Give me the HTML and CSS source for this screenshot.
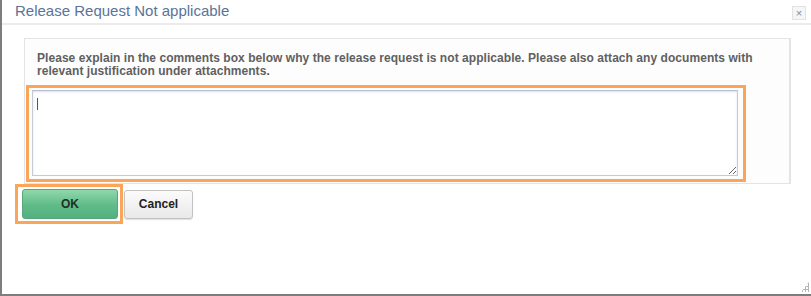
FILE: index.html
```html
<!DOCTYPE html>
<html lang="en">
<head>
    <meta charset="UTF-8">
    <meta name="viewport" content="width=device-width, initial-scale=1.0">
    <title>Release Request Not applicable</title>
    <link rel="stylesheet" href="styles.css">
</head>
<body>
    <div class="dialog">
        <div class="title-bar">
            <span class="title">Release Request Not applicable</span>
            <span class="close">&times;</span>
        </div>

        <div class="dialog-body">
            <div class="panel">
                <p class="note">Please explain in the comments box below why the release request is not applicable. Please also attach any documents with relevant justification under attachments.</p>
                <div class="highlight comment-wrap">
                    <textarea id="comments" name="comments"></textarea>
                </div>
            </div>

            <div class="actions">
                <div class="highlight ok-wrap">
                    <button type="submit" class="btn btn-ok">OK</button>
                </div>
                <button type="button" class="btn btn-cancel">Cancel</button>
            </div>
        </div>
        <div class="grip"></div>
    </div>
</body>
</html>
```

FILE: styles.css
```css
body {
    margin: 0;
    font-family: "Liberation Sans", Arial, sans-serif;
    background: #ffffff;
}
.dialog {
    position: relative;
    width: 809px;
    height: 294px;
    border-left: 2px solid #7d7d7d;
    border-bottom: 2px solid #7d7d7d;
    background: #ffffff;
}
.title-bar {
    display: flex;
    align-items: center;
    justify-content: space-between;
    height: 23px;
    padding: 0 5px 0 13px;
    border-bottom: 2px solid #ebebeb;
}
.title {
    font-size: 15px;
    color: #5a7399;
    margin-top: -3px;
}
.close {
    display: flex;
    align-items: center;
    justify-content: center;
    width: 12px;
    height: 12px;
    margin-top: 3px;
    border: 1px solid #e2e2e2;
    background: #f6f6f6;
    color: #8a8a8a;
    font-size: 11px;
    line-height: 1;
}
.dialog-body {
    padding: 13px 20px 0 22px;
}
.panel {
    border: 1px solid #e4e4e4;
    border-right-width: 2px;
    background: #fdfdfd;
    padding: 13px 0 0 1px;
    height: 131px;
}
.note {
    margin: 0 0 7px 11px;
    width: 730px;
    font-size: 12px;
    font-weight: bold;
    line-height: 13px;
    color: #606060;
    letter-spacing: 0.05px;
}
.highlight {
    border: 3px solid #f9a65a;
    display: inline-block;
}
.comment-wrap {
    position: relative;
    padding: 2px 5px 3px 3px;
}
.comment-wrap::before {
    content: "";
    position: absolute;
    left: 8px;
    top: 10px;
    width: 1px;
    height: 12px;
    background: #555;
}
textarea {
    display: block;
    width: 706px;
    height: 86px;
    margin: 0;
    box-sizing: border-box;
    border: 1px solid #c5cad6;
    border-top-color: #b9c0d2;
    box-shadow: inset 0 1px 2px rgba(120, 130, 160, 0.25);
    background: #ffffff;
    resize: both;
}
.actions {
    display: flex;
    align-items: center;
    gap: 1px;
    margin: 0 0 0 -9px;
}
.ok-wrap {
    padding: 2px 2px 2px 4px;
}
.btn {
    font-family: "Liberation Sans", Arial, sans-serif;
    font-size: 12px;
    font-weight: bold;
    color: #222;
    border-radius: 3px;
    cursor: pointer;
}
.btn-ok {
    width: 96px;
    height: 30px;
    border: 1px solid #5aa57b;
    background: linear-gradient(#8fd8ac, #5fbb88 55%, #54b07e);
    color: #1f2f25;
}
.btn-cancel {
    width: 69px;
    height: 29px;
    border: 1px solid #c2c2c2;
    background: linear-gradient(#fbfbfb, #e9e9e9);
    box-shadow: 0 1px 1px rgba(0, 0, 0, 0.12);
}
.grip {
    position: absolute;
    right: 2px;
    bottom: 2px;
    width: 8px;
    height: 10px;
    background-image: radial-gradient(#b5b5b5 1px, transparent 1.2px);
    background-size: 3px 3px;
    clip-path: polygon(100% 0, 100% 100%, 0 100%);
}
```
